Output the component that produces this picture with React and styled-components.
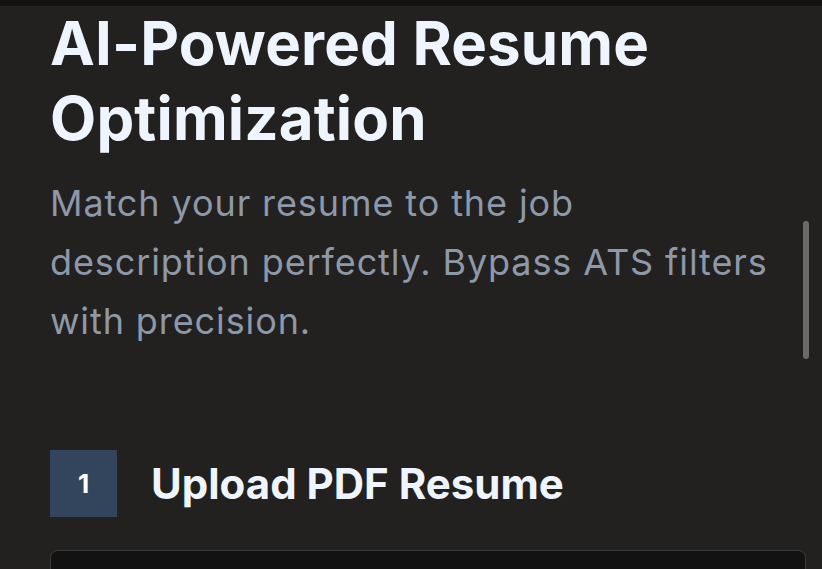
import React from "react";
import styled, { createGlobalStyle } from "styled-components";

const Global = createGlobalStyle`
  html, body { margin: 0; padding: 0; background: #222120; overflow: hidden; }
  body { font-family: Inter, "Noto Sans", sans-serif; }
  * { box-sizing: border-box; }
`;

const Page = styled.div`
  position: relative;
  width: 822px;
  height: 569px;
  overflow: hidden;
  background: #222120;
`;

const TopBar = styled.div`
  height: 6px;
  background: #121212;
`;

const Content = styled.main`
  padding: 0 16px 0 50px;
  display: flex;
  flex-direction: column;
`;

const Title = styled.h1`
  margin: 0;
  font-size: 60px;
  line-height: 75px;
  font-weight: 700;
  letter-spacing: 0.15px;
  color: #eef5fe;
`;

const Subtitle = styled.p`
  margin: 18px 0 0;
  max-width: 728px;
  font-size: 36px;
  line-height: 59px;
  font-weight: 400;
  letter-spacing: 0.025em;
  color: #8d98a9;
`;

const StepHeader = styled.div`
  display: flex;
  align-items: center;
  gap: 34px;
  margin-top: 99px;
`;

const StepBadge = styled.div`
  width: 67px;
  height: 67px;
  background: #33455c;
  color: #ffffff;
  display: flex;
  align-items: center;
  justify-content: center;
  font-size: 26px;
  font-weight: 700;
`;

const StepTitle = styled.h2`
  margin: 0;
  font-size: 42px;
  font-weight: 700;
  color: #eef5fe;
`;

const Card = styled.section`
  margin-top: 33px;
  height: 200px;
  background: #121212;
  border: 1px solid #3a3a3a;
  border-radius: 8px;
`;

const ScrollThumb = styled.div`
  position: absolute;
  right: 13px;
  top: 221px;
  width: 6px;
  height: 138px;
  border-radius: 3px;
  background: #6a6a6a;
`;

export default function App() {
  return (
    <Page>
      <Global />
      <TopBar />
      <Content>
        <Title>AI-Powered Resume Optimization</Title>
        <Subtitle>
          Match your resume to the job description perfectly. Bypass ATS filters with precision.
        </Subtitle>
        <StepHeader>
          <StepBadge>1</StepBadge>
          <StepTitle>Upload PDF Resume</StepTitle>
        </StepHeader>
        <Card />
      </Content>
      <ScrollThumb />
    </Page>
  );
}
